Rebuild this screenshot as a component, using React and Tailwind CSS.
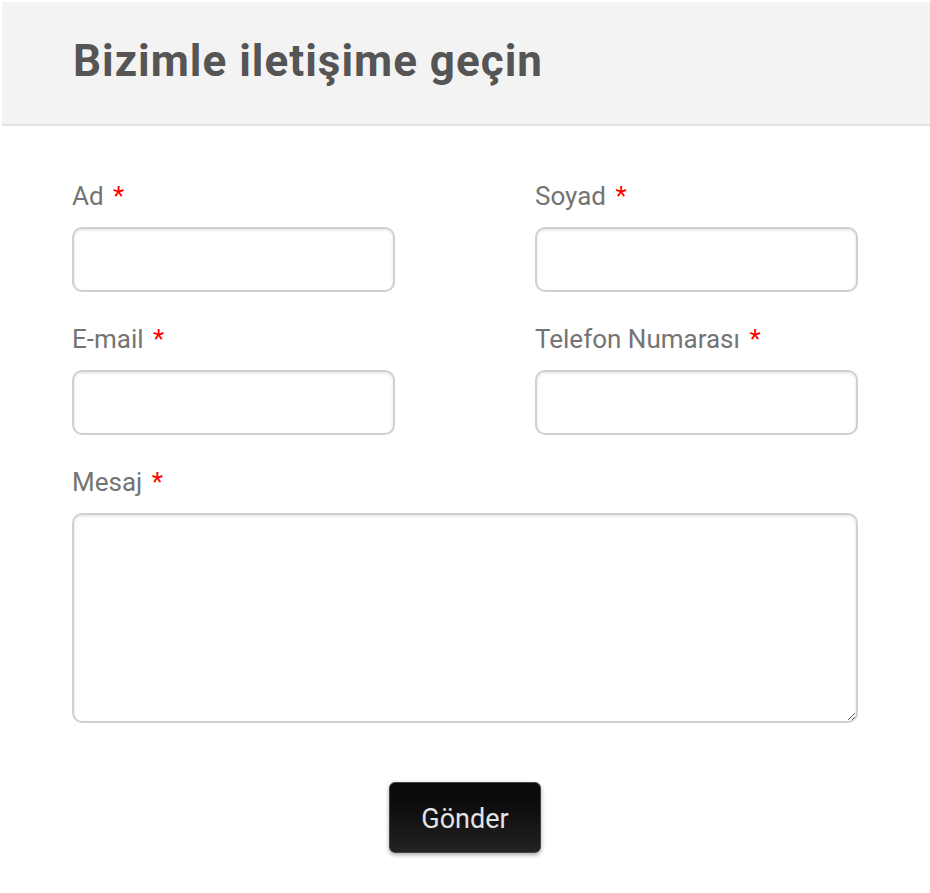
import React from "react";

function Label({ children }) {
  return (
    <label className="block text-[26px] leading-[28px] text-[#747474] mb-[17px]">
      {children} <span className="text-[#ff0000] ml-[3px]">*</span>
    </label>
  );
}

function Input() {
  return (
    <input
      type="text"
      className="block w-[323px] h-[65px] rounded-[10px] border-2 border-[#d0d0d0] bg-white shadow-[inset_0_1px_3px_rgba(0,0,0,0.12)] outline-none"
    />
  );
}

export default function App() {
  return (
    <div className="w-[930px] h-[893px] bg-white pt-[2px] pl-[2px]" style={{ fontFamily: "Roboto, 'Liberation Sans', sans-serif" }}>
      <div className="h-[124px] bg-[#f3f3f3] border-b-2 border-[#e2e2e2] flex items-center pl-[71px]">
        <h1 className="text-[44px] font-bold text-[#555555] leading-none tracking-[1px] -mt-[4px]">Bizimle iletişime geçin</h1>
      </div>
      <div className="pl-[70px] pt-[56px]">
        <div className="grid grid-cols-[463px_323px] gap-y-[33px]">
          <div>
            <Label>Ad</Label>
            <Input />
          </div>
          <div>
            <Label>Soyad</Label>
            <Input />
          </div>
          <div>
            <Label>E-mail</Label>
            <Input />
          </div>
          <div>
            <Label>Telefon Numarası</Label>
            <Input />
          </div>
        </div>
        <div className="mt-[33px]">
          <Label>Mesaj</Label>
          <textarea className="block w-[786px] h-[210px] rounded-[10px] border-2 border-[#d0d0d0] bg-white shadow-[inset_0_1px_3px_rgba(0,0,0,0.12)] outline-none resize" />
        </div>
        <div className="w-[786px] flex justify-center mt-[59px]">
          <button className="w-[152px] h-[71px] pt-[4px] rounded-[6px] border border-[#444] text-[27px] text-[#e4e4e4] bg-[linear-gradient(to_bottom,#0a0a0a_0%,#0c0c0c_30%,#222222_100%)] shadow-[0_2px_4px_rgba(0,0,0,0.35)]">
            Gönder
          </button>
        </div>
      </div>
    </div>
  );
}
